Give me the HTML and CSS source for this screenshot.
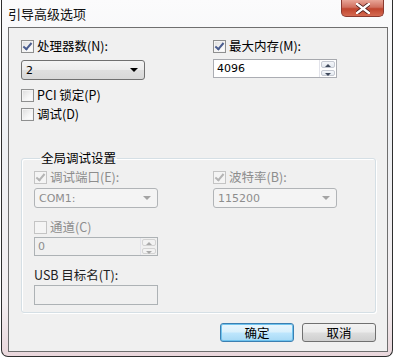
FILE: index.html
```html
<!DOCTYPE html>
<html lang="zh-CN">
<head>
    <meta charset="UTF-8">
    <meta name="viewport" content="width=device-width, initial-scale=1.0">
    <title>引导高级选项</title>
    <link rel="stylesheet" href="styles.css">
</head>
<body>
    <div class="window">
        <div class="titlebar">
            <span class="title">引导高级选项</span>
            <span class="close-button">
                <svg width="14" height="11" viewBox="0 0 14 11">
                    <path d="M1 1 L13 10 M13 1 L1 10" stroke="#4a1a1a" stroke-width="4" stroke-linecap="square"/>
                    <path d="M1 1 L13 10 M13 1 L1 10" stroke="#fff" stroke-width="2.4" stroke-linecap="square"/>
                </svg>
            </span>
        </div>

        <div class="client">
            <div class="top-grid">
                <div class="col">
                    <div class="check-row">
                        <span class="checkbox checked"></span>
                        <span>处理器数(N):</span>
                    </div>
                    <div class="select select-first">
                        <span>2</span>
                        <span class="arrow"></span>
                    </div>
                    <div class="check-row row-pci">
                        <span class="checkbox"></span>
                        <span>PCI 锁定(P)</span>
                    </div>
                    <div class="check-row row-debug">
                        <span class="checkbox"></span>
                        <span>调试(D)</span>
                    </div>
                </div>
                <div class="col">
                    <div class="check-row">
                        <span class="checkbox checked"></span>
                        <span>最大内存(M):</span>
                    </div>
                    <div class="spin spin-first">
                        <span class="spin-value">4096</span>
                        <span class="spin-buttons">
                            <span class="spin-up"></span>
                            <span class="spin-down"></span>
                        </span>
                    </div>
                </div>
            </div>

            <fieldset class="group">
                <legend>全局调试设置</legend>
                <div class="group-grid">
                    <div class="col">
                        <div class="check-row disabled">
                            <span class="checkbox checked"></span>
                            <span>调试端口(E):</span>
                        </div>
                        <div class="select disabled select-inner">
                            <span>COM1:</span>
                            <span class="arrow"></span>
                        </div>
                        <div class="check-row disabled row-channel">
                            <span class="checkbox"></span>
                            <span>通道(C)</span>
                        </div>
                        <div class="spin disabled spin-inner">
                            <span class="spin-value">0</span>
                            <span class="spin-buttons">
                                <span class="spin-up"></span>
                                <span class="spin-down"></span>
                            </span>
                        </div>
                        <div class="field-label">USB 目标名(T):</div>
                        <div class="textbox disabled"></div>
                    </div>
                    <div class="col">
                        <div class="check-row disabled">
                            <span class="checkbox checked"></span>
                            <span>波特率(B):</span>
                        </div>
                        <div class="select disabled select-inner">
                            <span>115200</span>
                            <span class="arrow"></span>
                        </div>
                    </div>
                </div>
            </fieldset>

            <div class="buttons">
                <button class="btn btn-default">确定</button>
                <button class="btn">取消</button>
            </div>
        </div>
    </div>
</body>
</html>
```

FILE: styles.css
```css
body {
    margin: 0;
    background-color: #fff;
    font-family: "Noto Sans CJK SC", "DejaVu Sans", sans-serif;
    font-size: 12.5px;
    color: #000;
}

.window {
    box-sizing: border-box;
    width: 392px;
    height: 357px;
    margin-left: 1px;
    padding: 0 4px 4px 6px;
    border: 1px solid #2e2e2e;
    border-top: none;
    border-radius: 0 0 7px 7px;
    background: linear-gradient(180deg, #fbfbfc 0%, #eef0f3 40%, #f3eef0 85%, #ead7dc 100%);
}

/* title bar */
.titlebar {
    height: 27px;
    display: flex;
    justify-content: space-between;
    align-items: flex-start;
}

.title {
    margin-top: 6px;
    font-size: 13px;
    line-height: 16px;
    color: #111;
}

.close-button {
    width: 43px;
    height: 17px;
    margin-right: 4px;
    box-sizing: border-box;
    border: 1px solid #8a3a30;
    border-top: none;
    border-radius: 0 0 5px 5px;
    background: linear-gradient(180deg, #e8a597 0%, #d0705f 45%, #c0452e 55%, #d46a52 100%);
    display: flex;
    justify-content: center;
    align-items: center;
}

/* client area */
.client {
    box-sizing: border-box;
    height: 325px;
    border: 1px solid #6f6f6f;
    background-color: #f0f0f0;
    padding: 11px 11px 0 12px;
}

.top-grid, .group-grid {
    display: grid;
    grid-template-columns: 192px 1fr;
}

.group-grid {
    grid-template-columns: 179px 1fr;
}

.col {
    display: flex;
    flex-direction: column;
    align-items: flex-start;
}

.check-row {
    display: flex;
    align-items: center;
    height: 14px;
    line-height: 14px;
    white-space: nowrap;
}

.check-row.disabled {
    color: #8d8d8d;
}

.checkbox {
    box-sizing: border-box;
    width: 13px;
    height: 13px;
    margin-right: 3px;
    border: 1px solid #8e8f8f;
    background: linear-gradient(135deg, #dcdcdc 0%, #f6f6f6 60%, #fff 100%);
    box-shadow: inset 0 0 0 1px #f4f4f4;
    position: relative;
}

.checkbox.checked::after {
    content: "";
    position: absolute;
    left: 3px;
    top: 0px;
    width: 3px;
    height: 7px;
    border: solid #4a5d8f;
    border-width: 0 2px 2px 0;
    transform: rotate(40deg);
}

.disabled .checkbox {
    border-color: #c4c4c4;
    background: #f4f4f4;
    box-shadow: none;
}

.disabled .checkbox.checked::after {
    border-color: #b4b4b4;
}

/* dropdowns */
.select {
    box-sizing: border-box;
    width: 124px;
    height: 19px;
    border: 1px solid #707070;
    border-radius: 3px;
    background: linear-gradient(180deg, #f4f4f4 0%, #ececec 48%, #dfdfdf 52%, #d8d8d8 100%);
    display: flex;
    justify-content: space-between;
    align-items: center;
    padding: 0 6px 0 4px;
    line-height: 17px;
    font-family: "DejaVu Sans", sans-serif;
    font-size: 11px;
}

.select-first {
    margin-top: 7px;
    height: 20px;
}

.arrow {
    width: 0;
    height: 0;
    border-left: 4px solid transparent;
    border-right: 4px solid transparent;
    border-top: 4px solid #000;
}

.select.disabled {
    border-color: #b1b4b7;
    background: #f4f4f4;
    color: #8d8d8d;
}

.select.disabled .arrow {
    border-top-color: #a4a4a4;
}

/* spin boxes */
.spin, .textbox {
    box-sizing: border-box;
    width: 124px;
    height: 19px;
    border: 1px solid #abadb3;
    border-top-color: #a6a8ad;
    background-color: #fff;
    display: flex;
    justify-content: space-between;
    align-items: stretch;
    font-family: "DejaVu Sans", sans-serif;
    font-size: 11px;
    line-height: 17px;
}

.spin-first {
    margin-top: 6px;
}

.spin-value {
    padding-left: 3px;
}

.spin-buttons {
    width: 16px;
    display: flex;
    flex-direction: column;
    border-left: 1px solid #e2e3ea;
}

.spin-up, .spin-down {
    flex: 1;
    position: relative;
    margin: 1px;
    border: 1px solid #c5c9d2;
    border-radius: 2px;
    background: linear-gradient(180deg, #f5f7fa, #e3e8ef);
}

.spin-up::after, .spin-down::after {
    content: "";
    position: absolute;
    left: 3px;
    top: 2px;
    border-left: 3px solid transparent;
    border-right: 3px solid transparent;
}

.spin-up::after {
    border-bottom: 3px solid #404a5c;
}

.spin-down::after {
    border-top: 3px solid #404a5c;
}

.spin.disabled, .textbox.disabled {
    border-color: #adb2b5;
    background-color: #f0f0f0;
    color: #8d8d8d;
}

.spin.disabled .spin-up, .spin.disabled .spin-down {
    border-color: #d3d3d3;
    background: #f2f2f2;
}

.spin.disabled .spin-up::after {
    border-bottom-color: #a9a9a9;
}

.spin.disabled .spin-down::after {
    border-top-color: #a9a9a9;
}

.row-pci {
    margin-top: 8px;
}

.row-debug {
    margin-top: 5px;
}

/* group box */
.group {
    margin: 30px 0 0 0;
    width: 355px;
    box-sizing: border-box;
    padding: 5px 0 7px 12px;
    border: 1px solid #d5dfe5;
    border-radius: 3px;
    box-shadow: inset 1px 1px 0 #fff, 1px 1px 0 #fff;
}

.group legend {
    margin-left: 6px;
    padding: 0 1px;
    line-height: 14px;
    color: #000;
}

.select-inner {
    margin-top: 4px;
    height: 20px;
}

.row-channel {
    margin-top: 12px;
}

.spin-inner {
    margin-top: 3px;
}

.field-label {
    margin-top: 12px;
    line-height: 14px;
    color: #222;
}

.textbox {
    margin-top: 3px;
    height: 20px;
}

/* dialog buttons */
.buttons {
    display: flex;
    justify-content: flex-end;
    gap: 8px;
    margin-top: 10px;
}

.btn {
    box-sizing: border-box;
    width: 74px;
    height: 19px;
    padding: 0;
    border: 1px solid #707070;
    border-radius: 3px;
    background: linear-gradient(180deg, #f2f2f2 0%, #ebebeb 48%, #dddddd 52%, #cfcfcf 100%);
    font-family: "Noto Sans CJK SC", sans-serif;
    font-size: 12.5px;
    line-height: 16px;
    color: #000;
}

.btn-default {
    border-color: #3c7fb1;
    background: linear-gradient(180deg, #eaf6fd 0%, #d9f0fc 48%, #bee6fd 52%, #a7d9f5 100%);
    box-shadow: inset 0 0 0 1px #6fc3ee;
}
```
